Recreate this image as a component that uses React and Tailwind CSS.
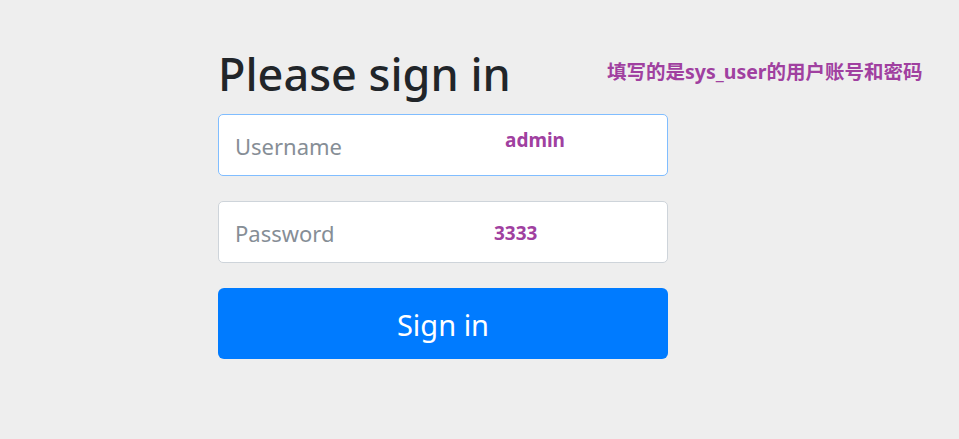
import React from 'react';

const FONT = { fontFamily: '"Noto Sans", "Open Sans", "Noto Sans CJK SC", sans-serif' };

export default function App() {
  return (
    <div className="relative w-[959px] h-[439px] bg-[#eeeeee] overflow-hidden" style={FONT}>
      <form className="ml-[218px] w-[450px] pt-[46px] flex flex-col">
        <h2 className="text-[45px] leading-[56px] font-medium text-[#212529] mb-[12px]">Please sign in</h2>

        <div className="relative">
          <input
            placeholder="Username"
            className="w-full h-[62px] px-[16px] pt-[2px] bg-white border border-[#80bdff] rounded-[5px] text-[22px] text-[#495057] placeholder:text-[#868e96] outline-none"
          />
          <span className="absolute left-[287px] top-[12px] text-[19px] font-bold text-[#a040a0]">admin</span>
        </div>

        <div className="relative mt-[25px]">
          <input
            type="password"
            placeholder="Password"
            className="w-full h-[62px] px-[16px] pt-[2px] bg-white border border-[#ced4da] rounded-[5px] text-[22px] text-[#495057] placeholder:text-[#868e96] outline-none"
          />
          <span className="absolute left-[276px] top-[18px] text-[19px] font-bold text-[#a040a0]">3333</span>
        </div>

        <button
          type="button"
          className="mt-[25px] h-[71px] w-full pt-[2px] bg-[#007bff] text-white text-[29px] rounded-[6px]"
        >
          Sign in
        </button>
      </form>

      <div className="absolute left-[607px] top-[57px] text-[19.5px] font-bold text-[#a040a0]">
        填写的是sys_user的用户账号和密码
      </div>
    </div>
  );
}
